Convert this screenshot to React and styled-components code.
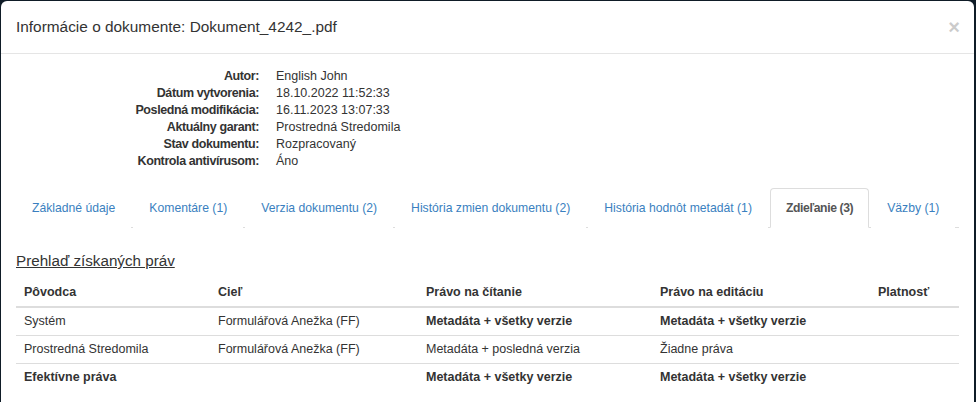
import React from "react";
import styled, { createGlobalStyle } from "styled-components";

const GlobalStyle = createGlobalStyle`
  html, body {
    margin: 0;
    padding: 0;
    height: 100%;
    overflow: hidden;
    background: #0f1c27;
  }
  body {
    font-family: "Liberation Sans", Arial, sans-serif;
    font-size: 12.5px;
    color: #333;
  }
`;

const info = [
  ["Autor:", "English John"],
  ["Dátum vytvorenia:", "18.10.2022 11:52:33"],
  ["Posledná modifikácia:", "16.11.2023 13:07:33"],
  ["Aktuálny garant:", "Prostredná Stredomila"],
  ["Stav dokumentu:", "Rozpracovaný"],
  ["Kontrola antivírusom:", "Áno"],
];

const tabs = [
  "Základné údaje",
  "Komentáre (1)",
  "Verzia dokumentu (2)",
  "História zmien dokumentu (2)",
  "História hodnôt metadát (1)",
  "Zdieľanie (3)",
  "Väzby (1)",
];

const rows = [
  { from: "Systém", to: "Formulářová Anežka (FF)", read: "Metadáta + všetky verzie", edit: "Metadáta + všetky verzie", readBold: true, editBold: true },
  { from: "Prostredná Stredomila", to: "Formulářová Anežka (FF)", read: "Metadáta + posledná verzia", edit: "Žiadne práva" },
  { from: "Efektívne práva", to: "", read: "Metadáta + všetky verzie", edit: "Metadáta + všetky verzie", fromBold: true, readBold: true, editBold: true },
];

function App() {
  return (
    <>
      <GlobalStyle />
      <Modal>
        <Header>
          <Title>Informácie o dokumente: Dokument_4242_.pdf</Title>
          <Close>×</Close>
        </Header>
        <Body>
          <InfoGrid>
            {info.map(([label, value]) => (
              <React.Fragment key={label}>
                <InfoLabel>{label}</InfoLabel>
                <InfoValue>{value}</InfoValue>
              </React.Fragment>
            ))}
          </InfoGrid>
          <Tabs>
            {tabs.map((t) => (
              <Tab key={t} $active={t.startsWith("Zdie")}>
                {t}
              </Tab>
            ))}
          </Tabs>
          <SectionTitle>Prehlaď získaných práv</SectionTitle>
          <Table>
            <colgroup>
              <col style={{ width: "194px" }} />
              <col style={{ width: "208px" }} />
              <col style={{ width: "234px" }} />
              <col style={{ width: "218px" }} />
              <col />
            </colgroup>
            <thead>
              <tr>
                <Th>Pôvodca</Th>
                <Th>Cieľ</Th>
                <Th>Právo na čítanie</Th>
                <Th>Právo na editáciu</Th>
                <Th>Platnosť</Th>
              </tr>
            </thead>
            <tbody>
              {rows.map((r, i) => (
                <tr key={i}>
                  <Td $bold={r.fromBold}>{r.from}</Td>
                  <Td>{r.to}</Td>
                  <Td $bold={r.readBold}>{r.read}</Td>
                  <Td $bold={r.editBold}>{r.edit}</Td>
                  <Td />
                </tr>
              ))}
            </tbody>
          </Table>
        </Body>
      </Modal>
    </>
  );
}

const Modal = styled.div`
  margin: 1px 2px 0 1px;
  min-height: 430px;
  background: #fff;
  border-radius: 6px 6px 0 0;
  overflow: hidden;
`;

const Header = styled.div`
  height: 52px;
  display: flex;
  align-items: center;
  justify-content: space-between;
  padding: 0 14px 0 15px;
  border-bottom: 1px solid #e5e5e5;
`;

const Title = styled.h4`
  margin: 0;
  font-size: 15.4px;
  font-weight: normal;
  color: #333;
`;

const Close = styled.span`
  font-size: 20px;
  font-weight: bold;
  color: #000;
  opacity: 0.2;
  line-height: 1;
`;

const Body = styled.div`
  padding: 14px 15px 0 15px;
`;

const InfoGrid = styled.div`
  display: grid;
  grid-template-columns: 243px 1fr;
  column-gap: 17px;
  line-height: 17px;
`;

const InfoLabel = styled.div`
  text-align: right;
  font-weight: bold;
  letter-spacing: -0.4px;
`;

const InfoValue = styled.div``;

const Tabs = styled.div`
  display: flex;
  margin-top: 18px;
  border-bottom: 1px solid #ddd;
`;

const Tab = styled.div`
  flex-shrink: 0;
  white-space: nowrap;
  height: 38px;
  display: flex;
  align-items: center;
  padding: 0 15px;
  margin-right: 2px;
  margin-bottom: -1px;
  font-size: 12.2px;
  border: 1px solid ${(p) => (p.$active ? "#ddd" : "transparent")};
  border-bottom-color: ${(p) => (p.$active ? "#fff" : "transparent")};
  border-radius: 4px 4px 0 0;
  background: #fff;
  color: ${(p) => (p.$active ? "#555" : "#3a7fc0")};
  font-weight: ${(p) => (p.$active ? "bold" : "normal")};
  letter-spacing: ${(p) => (p.$active ? "-0.4px" : "0")};
`;

const SectionTitle = styled.h4`
  margin: 22px 0 7px;
  font-size: 15.2px;
  font-weight: normal;
  line-height: 22px;
  text-decoration: underline;
  color: #333;
`;

const Table = styled.table`
  width: 100%;
  border-collapse: collapse;
  table-layout: fixed;
`;

const Th = styled.th`
  text-align: left;
  font-weight: bold;
  padding: 4px 8px;
  line-height: 19px;
  border-bottom: 2px solid #ddd;
`;

const Td = styled.td`
  padding: 4px 8px;
  line-height: 19px;
  font-weight: ${(p) => (p.$bold ? "bold" : "normal")};
  border-top: 1px solid #ddd;
  tr:first-child > & {
    border-top: none;
  }
`;

export default App;
